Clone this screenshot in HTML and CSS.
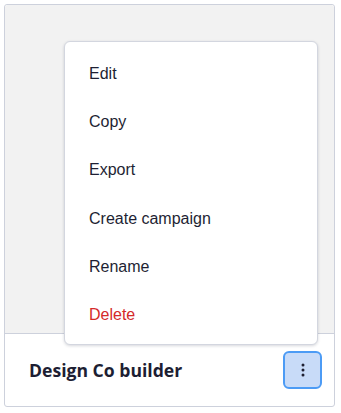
FILE: index.html
```html
<!DOCTYPE html>
<html>
<head>
<meta charset="utf-8">
<link rel="stylesheet" href="styles.css">
</head>
<body>
<div class="card">
  <div class="preview"></div>
  <div class="footer">
    <span class="title">Design Co builder</span>
    <button class="more" aria-label="More">
      <svg width="4" height="14" viewBox="0 0 4 14"><circle cx="2" cy="2" r="1.5" fill="#1f2033"/><circle cx="2" cy="7" r="1.5" fill="#1f2033"/><circle cx="2" cy="12" r="1.5" fill="#1f2033"/></svg>
    </button>
  </div>
  <ul class="menu">
    <li>Edit</li>
    <li>Copy</li>
    <li>Export</li>
    <li>Create campaign</li>
    <li>Rename</li>
    <li class="danger">Delete</li>
  </ul>
</div>
</body>
</html>
```
FILE: styles.css
```css
html, body { margin: 0; padding: 0; background: #fff; }
body { padding: 4px; }
.card {
  position: relative;
  width: 329px;
  height: 401px;
  border: 1px solid #cdd1dc;
  border-radius: 3px;
  display: flex;
  flex-direction: column;
  overflow: visible;
}
.preview {
  height: 328px;
  background: #f2f2f2;
  border-bottom: 1px solid #cdd1dc;
  border-radius: 3px 3px 0 0;
}
.footer {
  flex: 1;
  display: flex;
  align-items: center;
  justify-content: space-between;
  padding: 0 12px 0 24px;
}
.title {
  font-family: "Open Sans", sans-serif;
  font-weight: 700;
  font-size: 17.6px;
  color: #1d1e33;
}
.more {
  width: 39px;
  height: 38px;
  border: 2px solid #4c9bf5;
  border-radius: 6px;
  background: #c8dbf8;
  display: flex;
  align-items: center;
  justify-content: center;
  padding: 0;
}
.menu {
  position: absolute;
  left: 59px;
  top: 36px;
  width: 254px;
  height: 304px;
  box-sizing: border-box;
  margin: 0;
  padding: 8px 0 0;
  list-style: none;
  background: #fff;
  border: 1px solid #d3d6df;
  border-radius: 6px;
  box-shadow: 0 1px 3px rgba(30, 35, 60, 0.18);
  font-family: "Liberation Sans", Arial, sans-serif;
  font-size: 16px;
  color: #1e1f33;
}
.menu li {
  height: 48.2px;
  display: flex;
  align-items: center;
  padding-left: 24px;
}
.menu li.danger { color: #d42a2a; }
```
